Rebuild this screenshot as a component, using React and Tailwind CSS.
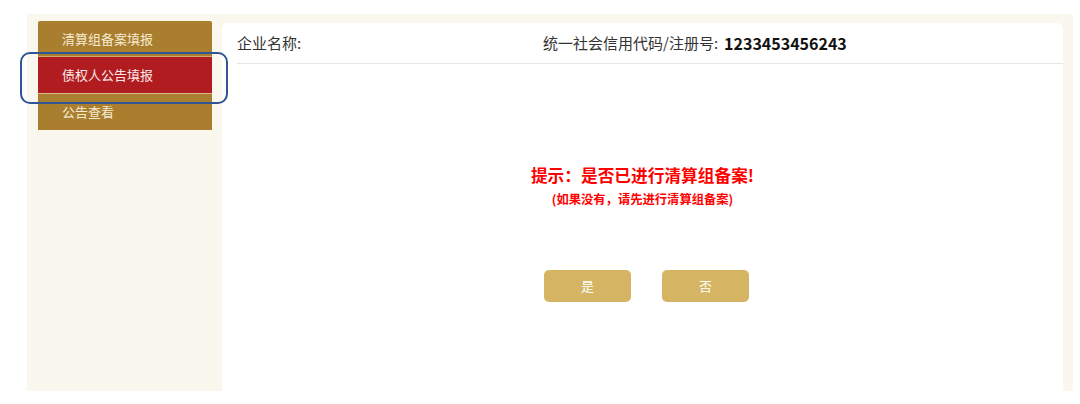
export default function App() {
  const font = { fontFamily: '"Noto Sans CJK SC", "Noto Sans", sans-serif' };
  return (
    <div className="w-[1080px] h-[404px] bg-white pt-[14px] pl-[27px]" style={font}>
      <div className="w-[1046px] h-[377px] bg-[#faf7ee] flex">
        <div className="w-[195px] pt-[7px] pl-[11px] relative">
          <div className="w-[174px] flex flex-col">
            <div className="h-[36px] bg-[#a97f2f] rounded-t-[2px] pl-[24px] flex items-center text-[13px] text-[#f6ead0] border-b border-[#c9a86a]">
              清算组备案填报
            </div>
            <div className="h-[37px] bg-[#b11c20] pl-[24px] flex items-center text-[13px] text-[#fbe9e9] border-b border-[#d8b88a]">
              债权人公告填报
            </div>
            <div className="h-[36px] bg-[#a97f2f] pl-[24px] flex items-center text-[13px] text-[#f6ead0]">
              公告查看
            </div>
          </div>
          <div className="absolute left-[-7px] top-[38px] w-[208px] h-[52px] border-2 border-[#2f5596] rounded-[10px]"></div>
        </div>
        <div className="w-[841px] mt-[9px] bg-white rounded-tr-[6px] rounded-tl-[6px] flex flex-col">
          <div className="ml-[15px] h-[41px] border-b border-[#e6e6e6] flex items-center text-[15px] text-[#333] relative">
            <span>企业名称:</span>
            <span className="absolute left-[306px] flex items-center">
              统一社会信用代码/注册号:
              <span className="ml-[6px] font-bold text-[#111] text-[16px]">1233453456243</span>
            </span>
          </div>
          <div className="flex flex-col items-center pt-[100px]">
            <div className="text-[16.7px] font-bold text-[#ff0000] leading-[22px]">提示：是否已进行清算组备案!</div>
            <div className="text-[12.3px] font-bold text-[#ff0000] mt-[5px] leading-[16px]">(如果没有，请先进行清算组备案)</div>
            <div className="flex gap-[31px] mt-[63px] ml-[8px]">
              <div className="w-[87px] h-[32px] bg-[#d5b563] rounded-[5px] flex items-center justify-center text-[13px] text-white">是</div>
              <div className="w-[87px] h-[32px] bg-[#d5b563] rounded-[5px] flex items-center justify-center text-[13px] text-white">否</div>
            </div>
          </div>
        </div>
      </div>
    </div>
  );
}
